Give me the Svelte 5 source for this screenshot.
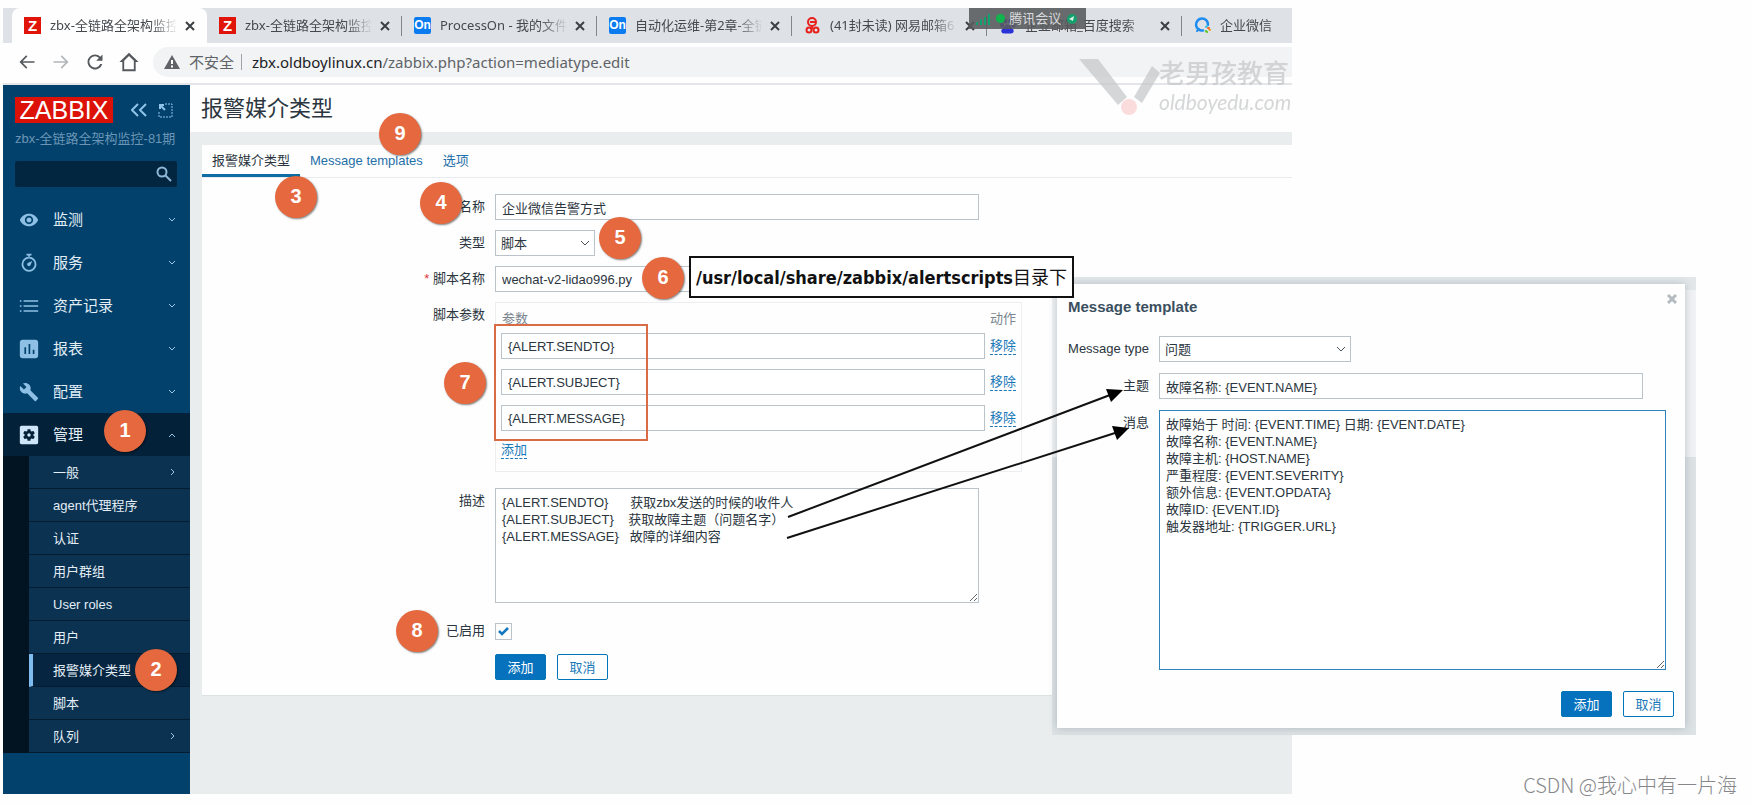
<script>
    import { onMount } from "svelte"

    const tabs = [
        { icon: "zabbix", title: "zbx-全链路全架构监控", active: true },
        { icon: "zabbix", title: "zbx-全链路全架构监控" },
        { icon: "on", title: "ProcessOn - 我的文件" },
        { icon: "on", title: "自动化运维-第2章-全链" },
        { icon: "netease", title: "(41封未读) 网易邮箱6" },
        { icon: "baidu", title: "企业邮箱_百度搜索" },
        { icon: "wecom", title: "企业微信" }
    ]

    const menu = [
        { name: "监测", icon: "M12 4.5C7 4.5 2.73 7.61 1 12c1.73 4.39 6 7.5 11 7.5s9.27-3.11 11-7.5c-1.73-4.39-6-7.5-11-7.5zM12 17c-2.76 0-5-2.24-5-5s2.24-5 5-5 5 2.24 5 5-2.24 5-5 5zm0-8c-1.66 0-3 1.34-3 3s1.34 3 3 3 3-1.34 3-3-1.34-3-3-3z" },
        { name: "服务", icon: "M9 1h6v2H9zM11 3h2v2h-2zM12 4.5a9 9 0 1 0 0 18 9 9 0 0 0 0-18zm0 2.2a6.8 6.8 0 1 1 0 13.6 6.8 6.8 0 0 1 0-13.6zM16 9.5l-5.5 2.5a2 2 0 1 0 3 3z" },
        { name: "资产记录", icon: "M1 5h2v2H1zM5.5 5H23v2H5.5zM1 11h2v2H1zM5.5 11H23v2H5.5zM1 17h2v2H1zM5.5 17H23v2H5.5z" },
        { name: "报表", icon: "M20 1H4C2.5 1 1 2.5 1 4v16c0 1.5 1.5 3 3 3h16c1.5 0 3-1.5 3-3V4c0-1.5-1.5-3-3-3zM8.5 18h-2v-8h2zm5 0h-2V6h2zm5 0h-2v-5h2z" },
        { name: "配置", icon: "M22.7 19l-9.1-9.1c.9-2.3.4-5-1.5-6.9-2-2-5-2.4-7.4-1.3L9 6 6 9 1.6 4.7C.4 7.1.9 10.1 2.9 12.1c1.9 1.9 4.6 2.4 6.9 1.5l9.1 9.1c.4.4 1 .4 1.4 0l2.3-2.3c.5-.4.5-1.1.1-1.4z" },
        { name: "管理", active: true, icon: "M12 10c-1.1 0-2 .9-2 2s.9 2 2 2 2-.9 2-2-.9-2-2-2zm9-9H3C1.9 1 1 1.9 1 3v18c0 1.1.9 2 2 2h18c1.1 0 2-.9 2-2V3c0-1.1-.9-2-2-2zm-3.75 11c0 .23-.02.46-.05.68l1.48 1.16c.13.11.17.3.08.45l-1.4 2.42c-.09.15-.27.21-.43.15l-1.74-.7c-.36.28-.76.51-1.18.69l-.26 1.85c-.03.17-.18.3-.35.3h-2.8c-.17 0-.32-.13-.35-.29l-.26-1.85c-.43-.18-.82-.41-1.18-.69l-1.74.7c-.16.06-.34 0-.43-.15l-1.4-2.42c-.09-.15-.05-.34.08-.45l1.48-1.16c-.03-.23-.05-.46-.05-.69 0-.23.02-.46.05-.68l-1.48-1.16c-.13-.11-.17-.3-.08-.45l1.4-2.42c.09-.15.27-.21.43-.15l1.74.7c.36-.28.76-.51 1.18-.69l.26-1.85c.03-.17.18-.3.35-.3h2.8c.17 0 .32.13.35.29l.26 1.85c.43.18.82.41 1.18.69l1.74-.7c.16-.06.34 0 .43.15l1.4 2.42c.09.15.05.34-.08.45l-1.48 1.16c.03.23.05.46.05.69z" }
    ]

    const submenu = [
        { name: "一般", more: true },
        { name: "agent代理程序" },
        { name: "认证" },
        { name: "用户群组" },
        { name: "User roles" },
        { name: "用户" },
        { name: "报警媒介类型", selected: true },
        { name: "脚本" },
        { name: "队列", more: true }
    ]

    // centre of every numbered marker
    const markers = [
        { n: 1, x: 125, y: 431 },
        { n: 2, x: 156, y: 670 },
        { n: 3, x: 296, y: 197 },
        { n: 4, x: 441, y: 203 },
        { n: 5, x: 620, y: 238 },
        { n: 6, x: 663, y: 278 },
        { n: 7, x: 465, y: 383 },
        { n: 8, x: 417, y: 631 },
        { n: 9, x: 400, y: 134 }
    ]

    let params = ["{ALERT.SENDTO}", "{ALERT.SUBJECT}", "{ALERT.MESSAGE}"]
    let name = "企业微信告警方式"
    let scriptName = "wechat-v2-lidao996.py"
    let description = [
        "{ALERT.SENDTO}      获取zbx发送的时候的收件人",
        "{ALERT.SUBJECT}    获取故障主题（问题名字）",
        "{ALERT.MESSAGE}   故障的详细内容"
    ].join("\n")
    let enabled = true
    let subject = "故障名称: {EVENT.NAME}"
    let message = [
        "故障始于 时间: {EVENT.TIME} 日期: {EVENT.DATE}",
        "故障名称: {EVENT.NAME}",
        "故障主机: {HOST.NAME}",
        "严重程度: {EVENT.SEVERITY}",
        "额外信息: {EVENT.OPDATA}",
        "故障ID: {EVENT.ID}",
        "触发器地址: {TRIGGER.URL}"
    ].join("\n")
    let messageBox

    onMount(() => {
        messageBox.focus({ preventScroll: true })
        messageBox.setSelectionRange(message.length, message.length)
    })

    function removeParam (index) {
        params = params.filter((p, i) => i !== index)
    }

    function addParam () {
        params = [...params, ""]
    }
</script>

<div class="page">
  <div class="browser">
    <div class="tab-strip">
      {#each tabs as tab}
        <div class="tab" class:active={tab.active}>
          {#if tab.icon === "zabbix"}
            <span class="favicon red">Z</span>
          {:else if tab.icon === "on"}
            <span class="favicon blue">On</span>
          {:else if tab.icon === "netease"}
            <svg class="favicon" viewBox="0 0 17 17" fill="none" stroke="#e8201c" stroke-width="2">
              <circle cx="8" cy="5" r="4"/>
              <path d="M6 5h5M8 9v3"/>
              <circle cx="5" cy="13" r="2.5"/>
              <circle cx="12" cy="13" r="2.5"/>
            </svg>
          {:else if tab.icon === "baidu"}
            <svg class="favicon" viewBox="0 0 17 17" fill="#2a32d8">
              <ellipse cx="3" cy="8" rx="2" ry="2.5"/>
              <ellipse cx="6.5" cy="4" rx="1.8" ry="2.6"/>
              <ellipse cx="11" cy="4" rx="1.8" ry="2.6"/>
              <ellipse cx="14.5" cy="8" rx="2" ry="2.5"/>
              <path d="M8.5 7.500c2.500 0 3 2.500 5 4s1.500 5-1.500 5h-7c-3 0-3.500-3.500-1.500-5s2.500-4 5-4z"/>
            </svg>
          {:else}
            <svg class="favicon" viewBox="0 0 17 17" fill="none" stroke-linecap="round">
              <path d="M14 8a6 6 0 1 0-5 5.500" stroke="#1d8cf0" stroke-width="2.5"/>
              <path d="M3 14l2-2" stroke="#1d8cf0" stroke-width="2"/>
              <path d="M12 10l1-1" stroke="#36c3e8" stroke-width="2"/>
              <path d="M15 12l1 1" stroke="#f0a020" stroke-width="2"/>
              <path d="M13 15l-1-1" stroke="#52c41a" stroke-width="2"/>
              <path d="M14 11h1" stroke="#f5662c" stroke-width="2"/>
            </svg>
          {/if}
          <span class="tab-title">{tab.title}</span>
          {#if tab.icon !== "wecom"}
            <button class="tab-close" aria-label="关闭标签页">
              <svg width="10" height="10" viewBox="0 0 10 10"><path d="M1 1l8 8M9 1l-8 8" stroke="#3c4043" stroke-width="2"/></svg>
            </button>
          {/if}
        </div>
      {/each}
    </div>

    <div class="toolbar">
      <button aria-label="后退"><svg viewBox="0 0 24 24"><path d="M21 11H6.8l5.6-5.6L11 4l-8 8 8 8 1.4-1.4L6.8 13H21z"/></svg></button>
      <button class="faded" aria-label="前进"><svg viewBox="0 0 24 24"><path d="M3 11h14.2l-5.6-5.6L13 4l8 8-8 8-1.4-1.4 5.6-5.6H3z"/></svg></button>
      <button aria-label="刷新"><svg viewBox="0 0 24 24"><path d="M18.3 5.6C16.7 4 14.5 3 12 3a9 9 0 1 0 8.700 11.300h-2.500A6.700 6.700 0 1 1 16.700 7.200L13.500 10.500H21V3z"/></svg></button>
      <button aria-label="主页"><svg viewBox="0 0 24 24"><path d="M12 1L0.500 12H4v11h16V12h3.500zM6.200 20.800v-10.300l5.800-5.800 5.800 5.800v10.300z"/></svg></button>
      <div class="omnibox">
        <svg width="16" height="14" viewBox="0 0 16 14"><path d="M8 0l8 14H0z" fill="#5f6368"/><path d="M8 5v4M8 10.500v2" stroke="#fff" stroke-width="2"/></svg>
        <span class="insecure">不安全</span>
        <span class="url"><b>zbx.oldboylinux.cn</b>/zabbix.php?action=mediatype.edit</span>
      </div>
    </div>

    <div class="app">
      <aside>
        <div class="brand">
          <a class="logo" href="#home">ZABBIX</a>
          <button aria-label="收起"><svg width="16" height="14" viewBox="0 0 16 14"><path d="M7 1L1 7l6 6M15 1L9 7l6 6" stroke-width="2"/></svg></button>
          <button aria-label="隐藏"><svg width="15" height="15" viewBox="0 0 15 15"><path d="M7 1h7v13H1V8" stroke-dasharray="2 1"/><path d="M2 6V2h4M2 2l5 5" stroke-width="2"/></svg></button>
        </div>
        <p class="server">zbx-全链路全架构监控-81期</p>
        <div class="search">
          <input type="text" aria-label="搜索"/>
          <svg width="16" height="16" viewBox="0 0 16 16"><circle cx="6" cy="6" r="4.5"/><path d="M9.5 9.500l5.500 5.500"/></svg>
        </div>
        <nav>
          {#each menu as item}
            <a class="item" class:active={item.active} href="#menu">
              <svg class="icon" width="20" height="20" viewBox="0 0 24 24" fill-rule="evenodd"><path d={item.icon}/></svg>
              <span>{item.name}</span>
              <svg class="chevron" width="8" height="8" viewBox="0 0 8 8"><path d={item.active ? "M1 6l3-3 3 3" : "M1 2l3 3 3-3"}/></svg>
            </a>
          {/each}
          <div class="submenu">
            {#each submenu as item}
              <a class:selected={item.selected} href="#submenu">
                <span>{item.name}</span>
                {#if item.more}
                  <svg class="chevron" width="8" height="8" viewBox="0 0 8 8"><path d="M3 1l3 3-3 3"/></svg>
                {/if}
              </a>
            {/each}
          </div>
        </nav>
      </aside>

      <main>
        <header><h1>报警媒介类型</h1></header>
        <section class="panel">
          <div class="panel-tabs">
            <a class="current" href="#media">报警媒介类型</a>
            <a href="#templates">Message templates</a>
            <a href="#options">选项</a>
          </div>
          <form class="fields" on:submit|preventDefault>
            <label for="name">名称</label>
            <input id="name" class="wide" type="text" bind:value={name}/>

            <label for="type">类型</label>
            <div class="select short">
              <select id="type"><option>脚本</option></select>
              <svg width="10" height="8" viewBox="0 0 10 8"><path d="M1 2l4 4 4-4"/></svg>
            </div>

            <label class="required" for="script">脚本名称</label>
            <input id="script" class="wide" type="text" bind:value={scriptName}/>

            <span class="label">脚本参数</span>
            <div class="params">
              <table>
                <thead><tr><th>参数</th><th>动作</th></tr></thead>
                <tbody>
                  {#each params as param, i}
                    <tr>
                      <td><input type="text" aria-label="参数" bind:value={param}/></td>
                      <td><button type="button" class="link" on:click={() => removeParam(i)}>移除</button></td>
                    </tr>
                  {/each}
                </tbody>
              </table>
              <button type="button" class="link" on:click={addParam}>添加</button>
            </div>

            <label for="description">描述</label>
            <textarea id="description" class="wide" bind:value={description}></textarea>

            <label for="enabled">已启用</label>
            <div class="check"><input id="enabled" type="checkbox" bind:checked={enabled}/></div>

            <div class="buttons">
              <button type="submit" class="btn">添加</button>
              <button type="button" class="btn alt">取消</button>
            </div>
          </form>
        </section>
      </main>
    </div>

    <div class="meeting">
      <svg width="16" height="12" viewBox="0 0 16 12"><path d="M2 9v3M6 6v6M10 4v8M14 1v11" stroke="#14a06c" stroke-width="2"/></svg>
      <i></i>
      <span>腾讯会议</span>
      <svg width="12" height="12" viewBox="0 0 12 12"><circle cx="6" cy="6" r="5" fill="#14a06c"/><path d="M3 6l5-3-1 5z" fill="#d5f0e5"/></svg>
    </div>

    <div class="watermark">
      <svg width="84" height="60" viewBox="0 0 84 60">
        <path d="M0 1h19l29 38-9 8zM73 8l8 7-18 30-8-6z" fill="#c4c6c8"/>
        <circle cx="50" cy="49" r="8" fill="#fbcfcf"/>
      </svg>
      <div><strong>老男孩教育</strong><em>oldboyedu.com</em></div>
    </div>
  </div>

  <div class="backdrop">
    <div class="dialog" role="dialog" aria-labelledby="dialog-title">
      <div class="dialog-head">
        <h2 id="dialog-title">Message template</h2>
        <button aria-label="关闭"><svg width="10" height="10" viewBox="0 0 10 10"><path d="M1 1l8 8M9 1l-8 8" stroke="#b4bcc2" stroke-width="3"/></svg></button>
      </div>
      <form class="fields" on:submit|preventDefault>
        <label for="message-type">Message type</label>
        <div class="select medium">
          <select id="message-type"><option>问题</option></select>
          <svg width="10" height="8" viewBox="0 0 10 8"><path d="M1 2l4 4 4-4"/></svg>
        </div>
        <label for="subject">主题</label>
        <input id="subject" class="wide" type="text" bind:value={subject}/>
        <label for="message">消息</label>
        <textarea id="message" bind:this={messageBox} bind:value={message}></textarea>
        <div class="buttons">
          <button type="submit" class="btn">添加</button>
          <button type="button" class="btn alt">取消</button>
        </div>
      </form>
    </div>
  </div>

  <div class="frame"></div>
  <div class="callout">/usr/local/share/zabbix/alertscripts<span>目录下</span></div>
  <svg class="arrows" width="360" height="170" viewBox="0 0 360 170">
    <path d="M8 137L330 15M7 158L335 53" stroke="#111" stroke-width="2"/>
    <path d="M343 10l-17-1 5 13zM349 48l-17-2 5 14z" fill="#000"/>
  </svg>
  {#each markers as m}
    <span class="marker" style="left: {m.x}px; top: {m.y}px">{m.n}</span>
  {/each}
  <p class="credit">CSDN @我心中有一片海</p>
</div>

<style>
  :global(body) {
    margin: 0;
    background: #fefefe;
  }

  .page {
    position: relative;
    box-sizing: border-box;
    min-height: 100vh;
    padding: 8px 460px 10px 3px;
    font: 13px/17px "Liberation Sans", "Noto Sans CJK SC", sans-serif;
    color: #2b3640;
  }

  .page :global(*) {
    box-sizing: border-box;
  }

  button, input, select, textarea {
    margin: 0;
    padding: 0;
    font: inherit;
    color: inherit;
    border: none;
    border-radius: 0;
    background: none;
  }

  button {
    cursor: pointer;
  }

  a {
    text-decoration: none;
  }

  .browser {
    position: relative;
    overflow: hidden;
    background: #fefefe;
  }

  .tab-strip {
    display: flex;
    height: 35px;
    padding-left: 9px;
    overflow: hidden;
    background: #dee1e6;
  }

  .tab {
    display: flex;
    flex: none;
    align-items: center;
    gap: 9px;
    width: 195px;
    padding-left: 12px;
    font-family: "Noto Sans", "Noto Sans CJK SC", sans-serif;
    color: #45494d;
    background: linear-gradient(#80868b, #80868b) right center / 1px 20px no-repeat;
  }

  .tab.active {
    border-radius: 8px 8px 0 0;
    background: #fefefe;
  }

  .favicon {
    flex: none;
    width: 17px;
    height: 17px;
    font: bold 15px/17px "Liberation Sans", sans-serif;
    text-align: center;
    color: #fff;
  }

  .favicon.red {
    background: #e1140a;
  }

  .favicon.blue {
    font-size: 12px;
    border-radius: 2px;
    background: #0b7cf0;
  }

  .tab-title {
    overflow: hidden;
    width: 126px;
    white-space: nowrap;
    mask-image: linear-gradient(90deg, #000 100px, transparent 128px);
  }

  .tab-close {
    display: flex;
  }

  .toolbar {
    display: flex;
    align-items: center;
    gap: 14px;
    height: 42px;
    padding: 0 0 2px 14px;
    border-bottom: 2px solid #e3e5e8;
  }

  .toolbar button {
    display: flex;
    width: 20px;
  }

  .toolbar button svg {
    width: 20px;
    height: 20px;
    fill: #55595d;
  }

  .toolbar .faded svg {
    fill: #b4b7ba;
  }

  .omnibox {
    display: flex;
    flex: 1;
    align-items: center;
    height: 30px;
    padding-left: 11px;
    font: 15px/30px "Noto Sans", "Noto Sans CJK SC", sans-serif;
    color: #5f6368;
    border-radius: 15px 0 0 15px;
    background: #f1f3f4;
  }

  .insecure {
    margin: 0 10px 0 9px;
    padding-right: 7px;
    line-height: 16px;
    border-right: 1px solid #a0a4a8;
  }

  .url b {
    font-weight: normal;
    color: #202124;
  }

  .app {
    display: flex;
  }

  aside {
    flex: none;
    width: 187px;
    padding: 12px 0 41px;
    background: #02416b;
  }

  .brand {
    display: flex;
    align-items: center;
    height: 26px;
    padding-left: 12px;
  }

  .brand button {
    display: flex;
    margin-left: 11px;
  }

  .brand .logo + button {
    margin-left: 18px;
  }

  .brand svg {
    fill: none;
    stroke: #8fc3ea;
    stroke-width: 1;
  }

  .logo {
    width: 98px;
    font-size: 25px;
    line-height: 26px;
    text-align: center;
    color: #fff;
    background: #dc1208;
  }

  .server {
    margin: 7px 0 14px 12px;
    color: #6b95b6;
    white-space: nowrap;
  }

  .search {
    display: flex;
    align-items: center;
    width: 162px;
    height: 26px;
    margin: 0 0 11px 12px;
    padding-right: 5px;
    border-radius: 2px;
    background: #02263f;
  }

  .search input {
    flex: 1;
    min-width: 0;
    padding-left: 6px;
    color: #fff;
    outline: none;
  }

  .search svg {
    fill: none;
    stroke: #8fb8d8;
    stroke-width: 2;
  }

  .item {
    display: flex;
    align-items: center;
    gap: 14px;
    height: 43px;
    padding: 0 14px 0 16px;
    font-size: 15px;
    color: #e3eef7;
  }

  .icon {
    flex: none;
    fill: #8ec0e6;
  }

  .item.active {
    background: #04213a;
  }

  .active .icon {
    fill: #cfe6f8;
  }

  .chevron {
    flex: none;
    margin-left: auto;
    fill: none;
    stroke: #9cc5e6;
  }

  .submenu {
    border-left: 26px solid #021322;
  }

  .submenu a {
    display: flex;
    align-items: center;
    height: 33px;
    padding: 0 14px 0 24px;
    color: #e3eef7;
    border-bottom: 1px solid #041c30;
    background: #0b3250;
  }

  .submenu .selected {
    padding-left: 20px;
    border-left: 4px solid #7fbdf0;
    background: #062540;
  }

  main {
    flex: 1;
    min-width: 0;
    background: #e9edee;
  }

  header {
    height: 47px;
    padding-left: 11px;
    background: #fefefe;
  }

  h1 {
    margin: 0;
    font-size: 22px;
    font-weight: normal;
    line-height: 47px;
  }

  .panel {
    margin: 13px 0 0 12px;
    border-bottom: 1px solid #dde2e4;
    background: #fefefe;
  }

  .panel-tabs {
    display: flex;
    border-bottom: 1px solid #e8ecee;
  }

  .panel-tabs a {
    height: 32px;
    padding: 0 10px;
    line-height: 32px;
    color: #1f6fa8;
  }

  .panel-tabs .current {
    color: #2b3640;
    border-bottom: 3px solid #0f6da6;
  }

  .fields {
    display: grid;
    grid-template-columns: 283px 1fr;
    gap: 10px;
    align-items: start;
    justify-items: start;
    padding: 16px 0 15px;
  }

  .fields label, .label {
    justify-self: end;
    line-height: 26px;
    white-space: nowrap;
  }

  .required::before {
    content: "* ";
    color: #e33734;
  }

  .fields input[type="text"], .select select {
    height: 26px;
    padding: 0 6px;
    border: 1px solid #b9c3c9;
    background: #fff;
  }

  .fields .wide {
    width: 484px;
    max-width: 100%;
  }

  .select {
    position: relative;
  }

  .select select {
    width: 100%;
    padding-left: 5px;
    appearance: none;
  }

  .select svg {
    position: absolute;
    top: 9px;
    right: 5px;
    fill: none;
    stroke: #4a545c;
    pointer-events: none;
  }

  .short {
    width: 100px;
  }

  .medium {
    width: 192px;
  }

  .params {
    margin-bottom: 6px;
    padding: 0 5px 12px;
    border: 1px solid #ebeff1;
  }

  table {
    border-collapse: collapse;
  }

  th {
    height: 30px;
    padding: 0;
    font-weight: normal;
    text-align: left;
    color: #7a858e;
  }

  th:first-child {
    padding-left: 1px;
  }

  td {
    padding: 0 5px 10px 0;
  }

  td:last-child, th:last-child {
    padding-right: 0;
  }

  td input {
    display: block;
    width: 484px;
  }

  .link {
    display: block;
    line-height: 17px;
    color: #1a78b8;
    border-bottom: 1px dashed #1a78b8;
  }

  textarea {
    display: block;
    height: 115px;
    margin-bottom: 5px;
    padding: 5px 6px;
    line-height: 17px;
    border: 1px solid #b9c3c9;
    background: #fff;
    outline: none;
  }

  .check {
    display: flex;
    align-items: center;
    height: 26px;
  }

  .check input {
    width: 17px;
    height: 17px;
    border: 1px solid #b9c3c9;
    appearance: none;
  }

  .check input:checked {
    background: url("data:image/svg+xml,%3Csvg xmlns='http://www.w3.org/2000/svg' viewBox='0 0 15 15'%3E%3Cpath d='M3 7l3 3 6-6' fill='none' stroke='%231277bd' stroke-width='2.5'/%3E%3C/svg%3E");
  }

  .buttons {
    display: flex;
    grid-column: 2;
    gap: 11px;
  }

  .btn {
    width: 51px;
    height: 26px;
    color: #fff;
    border: 1px solid #0275b8;
    border-radius: 2px;
    background: #0672bd;
  }

  .btn.alt {
    color: #1a78b8;
    background: #fff;
  }

  .meeting {
    position: absolute;
    top: 0;
    left: 966px;
    display: flex;
    align-items: center;
    justify-content: space-between;
    width: 117px;
    height: 21px;
    padding: 0 8px 0 6px;
    color: #d8dadc;
    background: rgba(88, 90, 92, .88);
  }

  .meeting i {
    width: 9px;
    height: 9px;
    border-radius: 50%;
    background: #0fb44c;
  }

  .watermark {
    position: absolute;
    top: 50px;
    left: 1076px;
    display: flex;
    opacity: .7;
    pointer-events: none;
  }

  .watermark div {
    display: flex;
    flex-direction: column;
    margin-left: -4px;
    white-space: nowrap;
    color: #c4c6c8;
  }

  .watermark strong {
    font-size: 26px;
    font-weight: 500;
    line-height: 32px;
  }

  .watermark em {
    font: italic 21px/24px Lato, sans-serif;
  }

  .backdrop {
    position: absolute;
    top: 277px;
    left: 1052px;
    width: 644px;
    padding: 7px 11px 7px 5px;
    background: linear-gradient(#e3e7e9 13px, #f0f2f3 13px, #f0f2f3 180px, #dde2e4 180px);
  }

  .dialog {
    padding: 10px 11px 11px;
    background: #fefefe;
    box-shadow: 0 0 8px rgba(90, 110, 125, .35);
  }

  .dialog-head {
    display: flex;
    justify-content: space-between;
  }

  .dialog-head button {
    display: flex;
    align-self: flex-start;
    margin-right: -3px;
  }

  h2 {
    margin: 0;
    font-size: 15px;
    line-height: 26px;
    color: #3a4f5e;
  }

  .dialog .fields {
    grid-template-columns: 81px 1fr;
    row-gap: 11px;
    padding: 16px 0 0;
  }

  .dialog textarea {
    width: 507px;
    height: 260px;
    margin-bottom: 10px;
    border-color: #2f83b8;
  }

  .dialog .buttons {
    justify-self: end;
  }

  .frame {
    position: absolute;
    top: 324px;
    left: 494px;
    width: 154px;
    height: 117px;
    border: 2px solid #d96c47;
    pointer-events: none;
  }

  .callout {
    position: absolute;
    top: 256px;
    left: 689px;
    padding: 0 5px;
    font: bold 18px/37px "DejaVu Sans Condensed", "Noto Sans", sans-serif;
    color: #111;
    white-space: nowrap;
    border: 2px solid #111;
    background: #fff;
  }

  .callout span {
    font: 18px/36px "Noto Sans CJK SC", sans-serif;
  }

  .arrows {
    position: absolute;
    top: 380px;
    left: 780px;
    pointer-events: none;
  }

  .marker {
    position: absolute;
    width: 42px;
    height: 42px;
    font-size: 20px;
    font-weight: bold;
    line-height: 40px;
    text-align: center;
    color: #fff;
    border-radius: 50%;
    background: #e5683e;
    box-shadow: 1px 1px 2px rgba(0, 0, 0, .5);
    transform: translate(-50%, -50%);
  }

  .credit {
    position: absolute;
    right: 15px;
    bottom: 4px;
    margin: 0;
    font: 300 20px/30px "Noto Sans CJK SC", sans-serif;
    color: #85878a;
  }
</style>
